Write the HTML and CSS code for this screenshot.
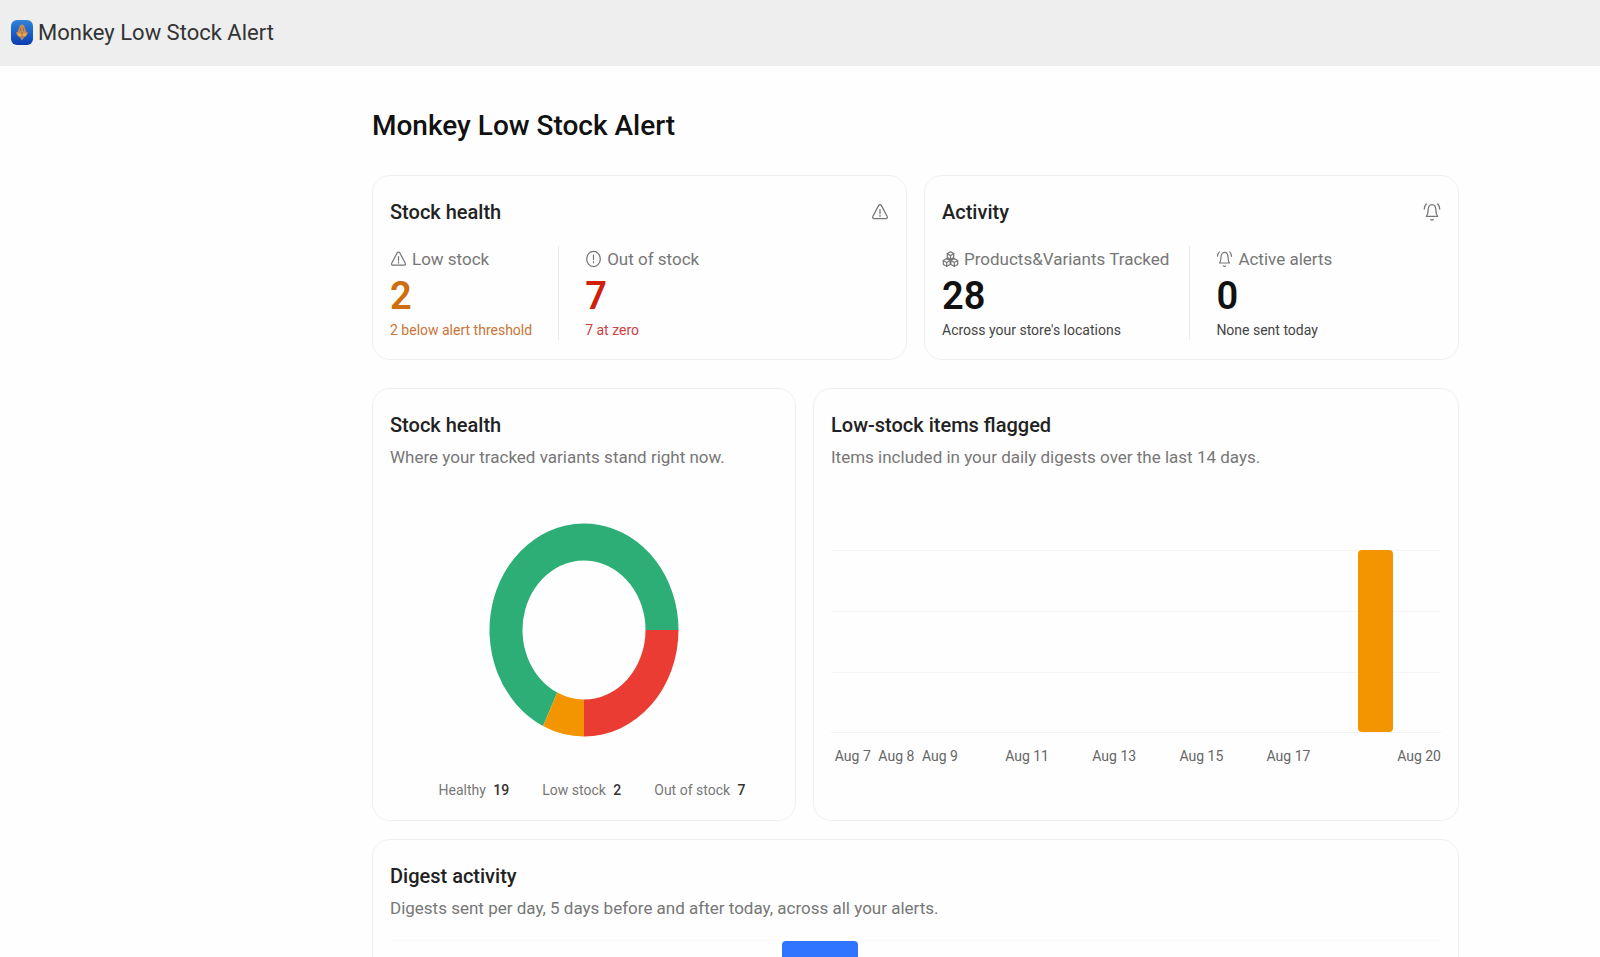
FILE: index.html
```html
<!DOCTYPE html>
<html lang="en">
<head>
<meta charset="utf-8">
<title>Monkey Low Stock Alert</title>
<link rel="stylesheet" href="styles.css">
</head>
<body>
<svg class="defs" aria-hidden="true">
  <symbol id="warn" viewBox="0 0 18 18"><path d="M7.7 2.4a1.5 1.5 0 0 1 2.6 0l5.9 11.1a1.4 1.4 0 0 1-1.3 2.1H3.1a1.4 1.4 0 0 1-1.3-2.1z"/><path d="M9 6.6v4M9 12.4v.9"/></symbol>
  <symbol id="info" viewBox="0 0 18 18"><ellipse cx="9" cy="9" rx="7.2" ry="8.1"/><path d="M9 5v4.6M9 11.8v1.1"/></symbol>
  <symbol id="bell" viewBox="0 0 18 20"><path d="M3.4 14.4h11.2c-1.2-1.4-1.6-3-1.6-5.4C13 5.4 11.600 2.600 9 2.600S5 5.400 5 9c0 2.400-.4 4-1.600 5.400z"/><path d="M7.700 17.600q1.300 1.100 2.600 0M3.300 2q-2 1.900-2 5M14.700 2q2 1.900 2 5"/></symbol>
  <symbol id="boxes" viewBox="0 0 18 18"><path d="M9 1.300l3.400 2v4.200L9 9.400 5.600 7.500V3.300zM5 8.600l3.600 2v4.200L5 16.700l-3.600-1.900v-4.200zM13 8.600l3.600 2v4.200L13 16.700l-3.600-1.900v-4.200z"/><path d="M5.600 3.500L9 5.400l3.400-1.900M9 5.400v4M1.400 10.800L5 12.700l3.600-1.900M5 12.700v4M9.400 10.800l3.600 1.900 3.600-1.900M13 12.700v4"/></symbol>
</svg>
<div class="page">
  <header class="topbar">
    <svg class="logo" viewBox="0 0 22 25" aria-hidden="true">
      <defs><linearGradient id="blue" x1="0" y1="0" x2="0" y2="1"><stop offset="0" stop-color="#3284d8"/><stop offset=".6" stop-color="#175bc4"/><stop offset="1" stop-color="#0b3cae"/></linearGradient></defs>
      <rect width="22" height="25" rx="6" fill="url(#blue)"/>
      <path d="M11 4.500c2 0 2.600 1.600 2.900 3.500.8.800 1 2 .8 3.200l2.300 1.300-1.800 3.500-2.400 1.700L11 20.500l-1.800-2.800L6.800 16 5 12.500l2.300-1.300c-.2-1.200 0-2.400.8-3.200.3-1.900.9-3.500 2.900-3.500z" fill="#c68a55"/>
      <path d="M6 13.500l10 0-1.500 2.500h-7z" fill="#efb04c"/><path d="M9.500 8v3M12.500 8v3M11 12v6" stroke="#a06a4a" fill="none"/>
    </svg>
    <span>Monkey Low Stock Alert</span>
  </header>
  <main class="main">
    <h1 class="title">Monkey Low Stock Alert</h1>
    <div class="row summary">
      <section class="card">
        <div class="card-head"><h2>Stock health</h2><svg class="icon"><use href="#warn"/></svg></div>
        <div class="stats">
          <div class="stat warning"><div class="label"><svg class="icon"><use href="#warn"/></svg>Low stock</div><div class="value">2</div><div class="note">2 below alert threshold</div></div>
          <div class="stat danger"><div class="label"><svg class="icon"><use href="#info"/></svg>Out of stock</div><div class="value">7</div><div class="note">7 at zero</div></div>
        </div>
      </section>
      <section class="card">
        <div class="card-head"><h2>Activity</h2><svg class="icon"><use href="#bell"/></svg></div>
        <div class="stats compact">
          <div class="stat"><div class="label"><svg class="icon"><use href="#boxes"/></svg>Products&amp;Variants Tracked</div><div class="value">28</div><div class="note">Across your store's locations</div></div>
          <div class="stat"><div class="label"><svg class="icon"><use href="#bell"/></svg>Active alerts</div><div class="value">0</div><div class="note">None sent today</div></div>
        </div>
      </section>
    </div>
    <div class="row charts">
      <section class="card">
        <h2>Stock health</h2>
        <p class="sub">Where your tracked variants stand right now.</p>
        <svg class="donut" viewBox="0 0 190 214" role="img" aria-label="Healthy 19, low stock 2, out of stock 7">
          <path fill="#2cae76" d="M189.500 107A94.500 106.500 0 1 0 54 203L68.300 169.600A61.500 69.500 0 1 1 156.500 107z"/>
          <path fill="#f29500" d="M54 203A94.500 106.500 0 0 0 95 213.500V176.500A61.500 69.500 0 0 1 68.300 169.600z"/>
          <path fill="#ea3c32" d="M95 213.500A94.500 106.500 0 0 0 189.500 107H156.500A61.500 69.500 0 0 1 95 176.500z"/>
        </svg>
        <ul class="legend"><li>Healthy <b>19</b></li><li>Low stock <b>2</b></li><li>Out of stock <b>7</b></li></ul>
      </section>
      <section class="card">
        <h2>Low-stock items flagged</h2>
        <p class="sub">Items included in your daily digests over the last 14 days.</p>
        <div class="plot"><i class="bar flagged"></i></div>
        <div class="axis"><span class="d7">Aug 7</span><span class="d8">Aug 8</span><span class="d9">Aug 9</span><span class="d11">Aug 11</span><span class="d13">Aug 13</span><span class="d15">Aug 15</span><span class="d17">Aug 17</span><span class="d20">Aug 20</span></div>
      </section>
    </div>
    <section class="card">
      <h2>Digest activity</h2>
      <p class="sub">Digests sent per day, 5 days before and after today, across all your alerts.</p>
      <div class="digest-plot"><i class="bar sent"></i></div>
    </section>
  </main>
</div>
</body>
</html>
```
FILE: styles.css
```css
* { box-sizing: border-box; }
body { margin: 0; background: #fefefe; color: #222; font-family: Roboto, Inter, sans-serif; }
h1, h2, p, ul { margin: 0; padding: 0; }
.defs { display: none; }
.page { height: 100vh; overflow: hidden; }
.topbar { display: flex; align-items: center; gap: 5px; height: 66px; padding: 0 11px 2px; background: #eee; font-size: 22px; color: #333; }
.logo { width: 22px; height: 25px; }
.main { display: flex; flex-direction: column; padding: 41px 141px 0 372px; }
.title { margin-bottom: 30px; font-size: 28px; line-height: 38px; font-weight: 500; color: #111; }
.row { display: grid; gap: 17px; }
.summary { grid-template-columns: 1fr 1fr; margin-bottom: 28px; }
.charts { grid-template-columns: 424fr 646fr; margin-bottom: 18px; }
.card { min-width: 0; padding: 23px 17px 19px; border: 1px solid #f0f0f0; border-radius: 18px; background: #fefefe; }
h2 { font-size: 20px; line-height: 26px; font-weight: 500; color: #222; }
.card-head { display: flex; justify-content: space-between; align-items: center; margin-bottom: 21px; }
.icon { width: 18px; height: 20px; fill: none; stroke: #777; stroke-width: 1.300; stroke-linecap: round; stroke-linejoin: round; }
.stats { display: flex; }
.stat + .stat { margin-left: 26px; padding-left: 26px; border-left: 1px solid #ebebeb; }
.compact .stat + .stat { margin-left: 20px; }
.label { display: flex; align-items: center; gap: 5px; height: 26px; font-size: 17px; color: #777; }
.label .icon { width: 17px; height: 18px; }
.value { font-size: 38px; line-height: 48px; font-weight: 600; color: #111; }
.note { font-size: 14px; line-height: 20px; color: #444; }
.warning .value { color: #cf6e0c; }
.warning .note { color: #cc7436; }
.danger .value { color: #cf200c; }
.danger .note { color: #d04040; }
.sub { margin-top: 6px; font-size: 17px; line-height: 26px; color: #777; }
.donut { display: block; width: 190px; height: 214px; margin: 53px auto 42px; }
.legend { display: flex; justify-content: center; gap: 33px; padding-left: 16px; list-style: none; font-size: 14px; line-height: 22px; color: #777; }
.legend b { margin-left: 4px; font-weight: 500; color: #333; }
.plot { display: grid; grid-template-columns: repeat(14, minmax(0, 1fr)); height: 183px; margin-top: 80px; border-bottom: 1px solid #f3f3f3; background: repeating-linear-gradient(#f5f5f5 0 1px, transparent 1px 61px); }
.bar { justify-self: center; width: 80%; border-radius: 4px; }
.flagged { grid-column: 13; background: #f29500; }
.axis { display: grid; grid-template-columns: repeat(14, minmax(0, 1fr)); justify-items: center; margin-top: 12px; font-size: 14px; line-height: 22px; color: #666; white-space: nowrap; }
.d7 { grid-column: 1; }
.d8 { grid-column: 2; }
.d9 { grid-column: 3; }
.d11 { grid-column: 5; }
.d13 { grid-column: 7; }
.d15 { grid-column: 9; }
.d17 { grid-column: 11; }
.d20 { grid-column: 14; justify-self: end; }
.digest-plot { display: grid; grid-template-columns: repeat(11, minmax(0, 1fr)); height: 183px; margin-top: 19px; border-top: 1px solid #fafafa; }
.sent { grid-column: 5; background: #2f75ff; }
```
